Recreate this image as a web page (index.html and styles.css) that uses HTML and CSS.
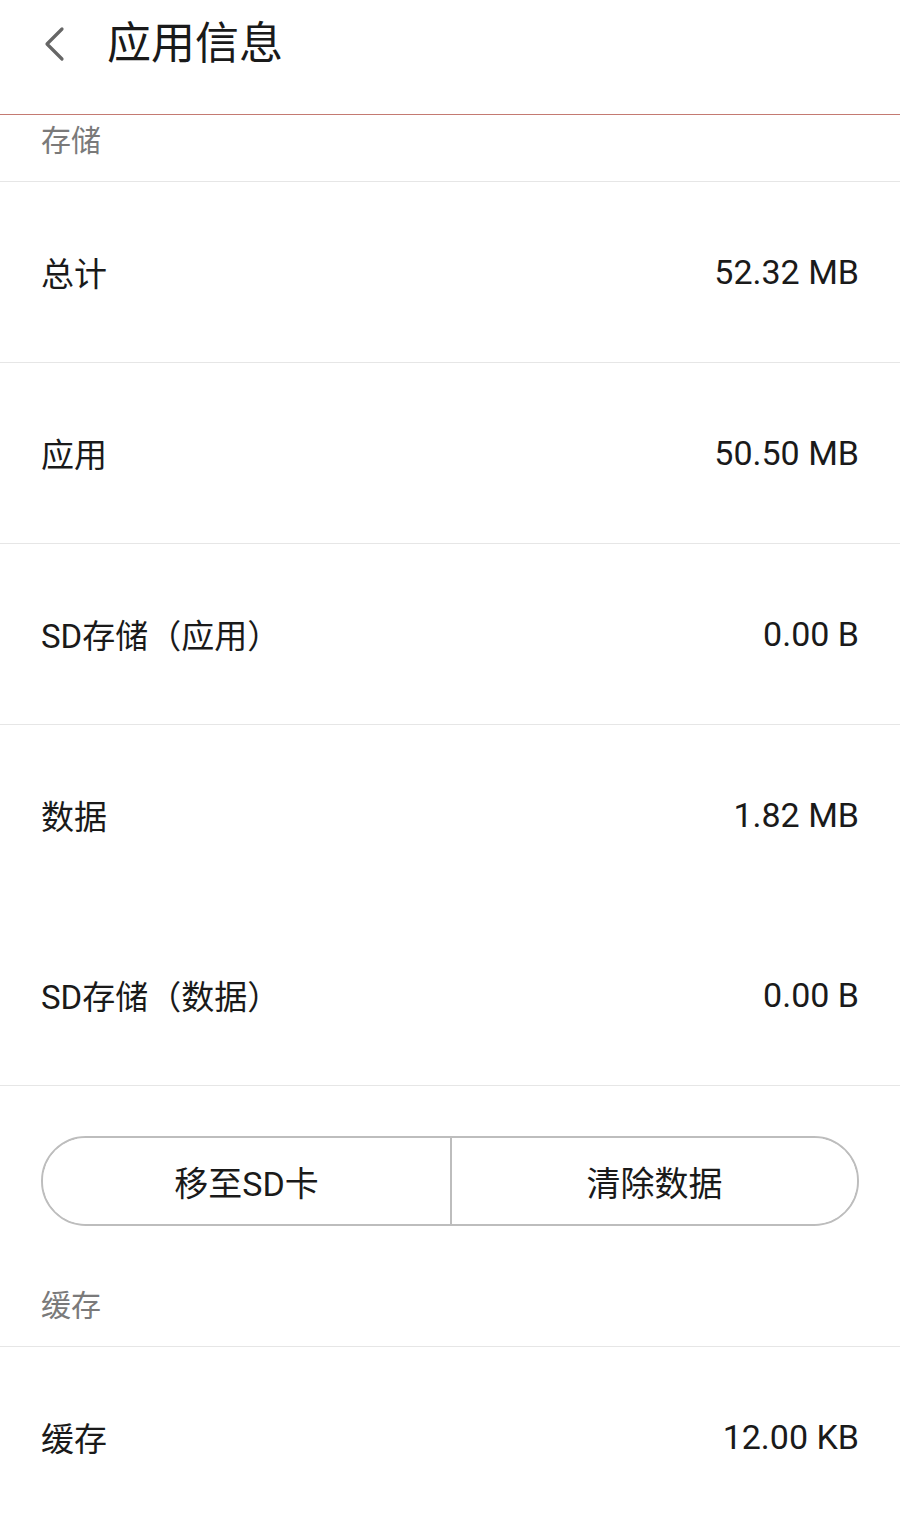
FILE: index.html
```html
<!DOCTYPE html>
<html lang="zh-CN">
<head>
  <meta charset="UTF-8">
  <meta name="viewport" content="width=device-width, initial-scale=1.0">
  <title>应用信息</title>
  <link rel="stylesheet" href="styles.css">
</head>
<body>
  <header class="top-bar">
    <svg class="back-icon" width="24" height="40" viewBox="0 0 24 40">
      <polyline points="19,5 4,20 19,35" fill="none" stroke="#666" stroke-width="3.2" stroke-linecap="round" stroke-linejoin="round"/>
    </svg>
    <h1 class="title">应用信息</h1>
  </header>

  <div class="section-label">存储</div>

  <div class="info-row">
    <span>总计</span>
    <span class="value">52.32 MB</span>
  </div>
  <div class="info-row">
    <span>应用</span>
    <span class="value">50.50 MB</span>
  </div>
  <div class="info-row">
    <span>SD存储（应用）</span>
    <span class="value">0.00 B</span>
  </div>
  <div class="info-row no-line">
    <span>数据</span>
    <span class="value">1.82 MB</span>
  </div>
  <div class="info-row">
    <span>SD存储（数据）</span>
    <span class="value">0.00 B</span>
  </div>

  <div class="actions">
    <div class="btn-group">
      <button class="pill-button">移至SD卡</button>
      <button class="pill-button">清除数据</button>
    </div>
  </div>

  <div class="section-label cache-label">缓存</div>

  <div class="info-row">
    <span>缓存</span>
    <span class="value">12.00 KB</span>
  </div>
</body>
</html>
```

FILE: styles.css
```css
body {
  margin: 0;
  background-color: #ffffff;
  color: #1a1a1a;
  font-family: Roboto, "Noto Sans CJK SC", sans-serif;
}
.top-bar {
  display: flex;
  align-items: center;
  height: 88px;
  padding: 0 0 26px 43px;
  border-bottom: 1px solid #c47a72;
}
.back-icon {
  display: block;
  margin-right: 40px;
}
.title {
  margin: 0;
  font-size: 44px;
  font-weight: 400;
  line-height: 60px;
  color: #1a1a1a;
}
.section-label {
  padding: 6px 41px 20px;
  font-size: 30px;
  line-height: 40px;
  color: #7a7a7a;
  border-bottom: 1px solid #e6e6e6;
}
.cache-label {
  padding-top: 60px;
}
.info-row {
  display: flex;
  justify-content: space-between;
  align-items: center;
  height: 180px;
  padding: 0 41px;
  font-size: 33px;
  border-bottom: 1px solid #e6e6e6;
}
.info-row.no-line {
  border-bottom: none;
}
.value {
  font-size: 34px;
}
.actions {
  padding: 50px 41px 0;
}
.btn-group {
  display: grid;
  grid-template-columns: 1fr 1fr;
  height: 86px;
  border: 2px solid #bdbdbd;
  border-radius: 45px;
  overflow: hidden;
}
.pill-button {
  border: none;
  background: #ffffff;
  color: #1a1a1a;
  font-family: Roboto, "Noto Sans CJK SC", sans-serif;
  font-size: 34px;
  cursor: pointer;
}
.pill-button + .pill-button {
  border-left: 2px solid #bdbdbd;
}
```
